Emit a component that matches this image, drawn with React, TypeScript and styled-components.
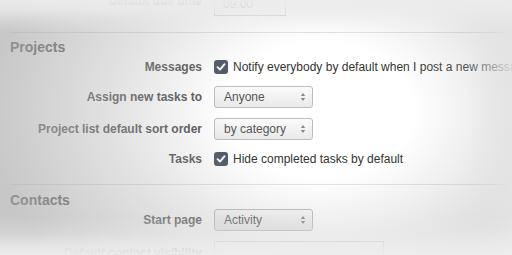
import React from "react";
import styled, { createGlobalStyle } from "styled-components";

const Global = createGlobalStyle`
  html, body { margin: 0; padding: 0; background: #fff; overflow: hidden; }
  body { font-family: "Liberation Sans", Arial, Helvetica, sans-serif; }
`;

const Page = styled.div`
  width: 512px;
  height: 255px;
  overflow: hidden;
  position: relative;
  background: #fff;
`;

const Scroller = styled.div`
  margin-top: -8px;
  padding: 0 6px 0 10px;
`;

const Section = styled.section<{ $headGap: number }>`
  display: flex;
  flex-direction: column;
  gap: 10px;
  & > h2 { margin-bottom: ${(p) => p.$headGap - 10}px; }
`;

const Heading = styled.h2`
  margin: 0;
  font-size: 14px;
  line-height: 16px;
  font-weight: bold;
  color: #444;
`;

const Divider = styled.hr<{ $top: number; $bottom: number }>`
  border: 0;
  border-top: 1px solid #e2e2e2;
  margin: ${(p) => p.$top}px 0 ${(p) => p.$bottom}px;
  height: 0;
`;

const Field = styled.div<{ $h: number }>`
  display: grid;
  grid-template-columns: 192px 1fr;
  column-gap: 12px;
  align-items: center;
  height: ${(p) => p.$h}px;
`;

const Label = styled.label`
  text-align: right;
  font-size: 12px;
  font-weight: bold;
  color: #555;
  white-space: nowrap;
`;

const TopLabel = styled(Label)`
  align-self: start;
  padding-top: 2px;
`;

const Check = styled.label`
  display: flex;
  align-items: center;
  gap: 5px;
  font-size: 12px;
  color: #333;
  white-space: nowrap;
`;

const Box = styled.span`
  width: 14px;
  height: 14px;
  border-radius: 3px;
  background: #4d5563;
  display: inline-flex;
  align-items: center;
  justify-content: center;
  flex: none;
`;

const SelectBox = styled.div<{ $w: number }>`
  box-sizing: border-box;
  width: ${(p) => p.$w}px;
  height: 22px;
  border: 1px solid #bdbdbd;
  border-radius: 3px;
  background: linear-gradient(#fbfbfb, #e9e9e9);
  display: flex;
  align-items: center;
  justify-content: space-between;
  padding: 0 6px 0 9px;
  font-size: 12px;
  color: #555;
`;

const TextInput = styled.div<{ $w: number }>`
  box-sizing: border-box;
  width: ${(p) => p.$w}px;
  height: 24px;
  border: 1px solid #c4c4c4;
  background: #fff;
  display: flex;
  align-items: center;
  padding: 0 8px;
  font-size: 12px;
  color: #666;
`;

const Vignette = styled.div`
  position: absolute;
  inset: 0;
  pointer-events: none;
  background:
    linear-gradient(to bottom, rgba(236,236,236,0.96) 0px, rgba(236,236,236,0.8) 10px, rgba(236,236,236,0.35) 20px, rgba(236,236,236,0) 32px),
    linear-gradient(to top, rgba(238,238,238,0.95) 0px, rgba(238,238,238,0.75) 10px, rgba(238,238,238,0.3) 22px, rgba(238,238,238,0) 38px),
    linear-gradient(to left, rgba(228,228,228,0.85) 0px, rgba(228,228,228,0) 45px),
    radial-gradient(ellipse 330px 240px at 320px 110px, rgba(178,178,178,0) 28%, rgba(178,178,178,0.35) 60%, rgba(178,178,178,0.72) 100%);
`;

const CheckIcon = () => (
  <svg width="10" height="10" viewBox="0 0 10 10">
    <path d="M1.6 5.2 L4 7.6 L8.6 2.2" fill="none" stroke="#fff" strokeWidth="1.9" strokeLinecap="round" strokeLinejoin="round" />
  </svg>
);

const Arrows = () => (
  <svg width="6" height="10" viewBox="0 0 6 10">
    <path d="M3 1 L5.2 4 H0.8 Z" fill="#888" />
    <path d="M3 9 L5.2 6 H0.8 Z" fill="#888" />
  </svg>
);

const Select = ({ value, w }: { value: string; w: number }) => (
  <SelectBox $w={w}>
    <span>{value}</span>
    <Arrows />
  </SelectBox>
);

export default function App() {
  return (
    <Page>
      <Global />
      <Scroller>
        <Section $headGap={10}>
          <Field $h={24}>
            <TopLabel>Default due time</TopLabel>
            <TextInput $w={72}>09:00</TextInput>
          </Field>
        </Section>
        <Divider $top={16} $bottom={6} />
        <Section $headGap={3}>
          <Heading>Projects</Heading>
          <Field $h={18}>
            <Label>Messages</Label>
            <Check>
              <Box><CheckIcon /></Box>
              Notify everybody by default when I post a new message
            </Check>
          </Field>
          <Field $h={22}>
            <Label>Assign new tasks to</Label>
            <Select value="Anyone" w={99} />
          </Field>
          <Field $h={22}>
            <Label>Project list default sort order</Label>
            <Select value="by category" w={99} />
          </Field>
          <Field $h={18}>
            <Label>Tasks</Label>
            <Check>
              <Box><CheckIcon /></Box>
              Hide completed tasks by default
            </Check>
          </Field>
        </Section>
        <Divider $top={16} $bottom={7} />
        <Section $headGap={1}>
          <Heading>Contacts</Heading>
          <Field $h={22}>
            <Label>Start page</Label>
            <Select value="Activity" w={99} />
          </Field>
          <Field $h={22}>
            <Label>Default contact visibility</Label>
            <TextInput $w={170}></TextInput>
          </Field>
        </Section>
      </Scroller>
      <Vignette />
    </Page>
  );
}
